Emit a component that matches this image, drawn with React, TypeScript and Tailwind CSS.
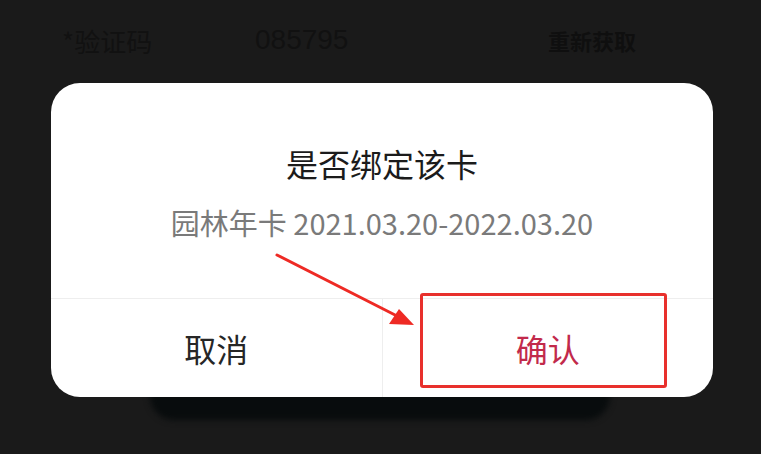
import React from "react";

const font = { fontFamily: '"Noto Sans CJK SC", "Noto Sans", sans-serif' };

const Backdrop = () => (
  <div className="flex items-center h-[80px] px-[62px] text-[#111111]">
    <div className="text-[26px] w-[193px]">*验证码</div>
    <div className="text-[28px] flex-1 font-['Liberation_Sans',sans-serif]">085795</div>
    <div className="text-[22px] font-bold mr-[55px] px-2 text-[#0f0f0f]">重新获取</div>
  </div>
);

const Arrow = () => (
  <svg
    className="absolute left-[220px] top-[168px] pointer-events-none"
    width="150"
    height="80"
    viewBox="0 0 150 80"
  >
    <line x1="6" y1="4" x2="128" y2="66" stroke="#ee2a24" strokeWidth="3" strokeLinecap="round" />
    <polygon points="143,74 118,73 128,58" fill="#ee2a24" />
  </svg>
);

const ConfirmDialog = () => (
  <div className="absolute left-[51px] top-[83px] w-[662px] h-[314px] bg-white rounded-[29px] flex flex-col overflow-hidden">
    <div className="flex-1 flex flex-col items-center pt-[60px]">
      <div className="text-[32px] leading-[40px] text-[#1b1b1b]">是否绑定该卡</div>
      <div className="text-[29px] leading-[36px] text-[#7a7a7a] mt-[21px]">
        园林年卡 2021.03.20-2022.03.20
      </div>
    </div>
    <div className="h-[99px] flex border-t border-[#eeeeee]">
      <div className="flex-1 flex items-center justify-center text-[32px] text-[#262626] border-r border-[#eeeeee]">
        取消
      </div>
      <div className="flex-1 flex items-center justify-center text-[32px] text-[#c22a4b]">
        确认
      </div>
    </div>
    <div className="absolute left-[369px] top-[210px] w-[247px] h-[95px] border-[3px] border-[#e8302c] rounded-[3px]" />
    <Arrow />
  </div>
);

export default function App() {
  return (
    <div className="relative w-[761px] h-[454px] bg-[#1a1a1a] overflow-hidden" style={font}>
      <Backdrop />
      <div className="absolute left-[150px] top-[380px] w-[460px] h-[40px] rounded-b-[24px] bg-[#080c0d] blur-[3px]" />
      <ConfirmDialog />
    </div>
  );
}
